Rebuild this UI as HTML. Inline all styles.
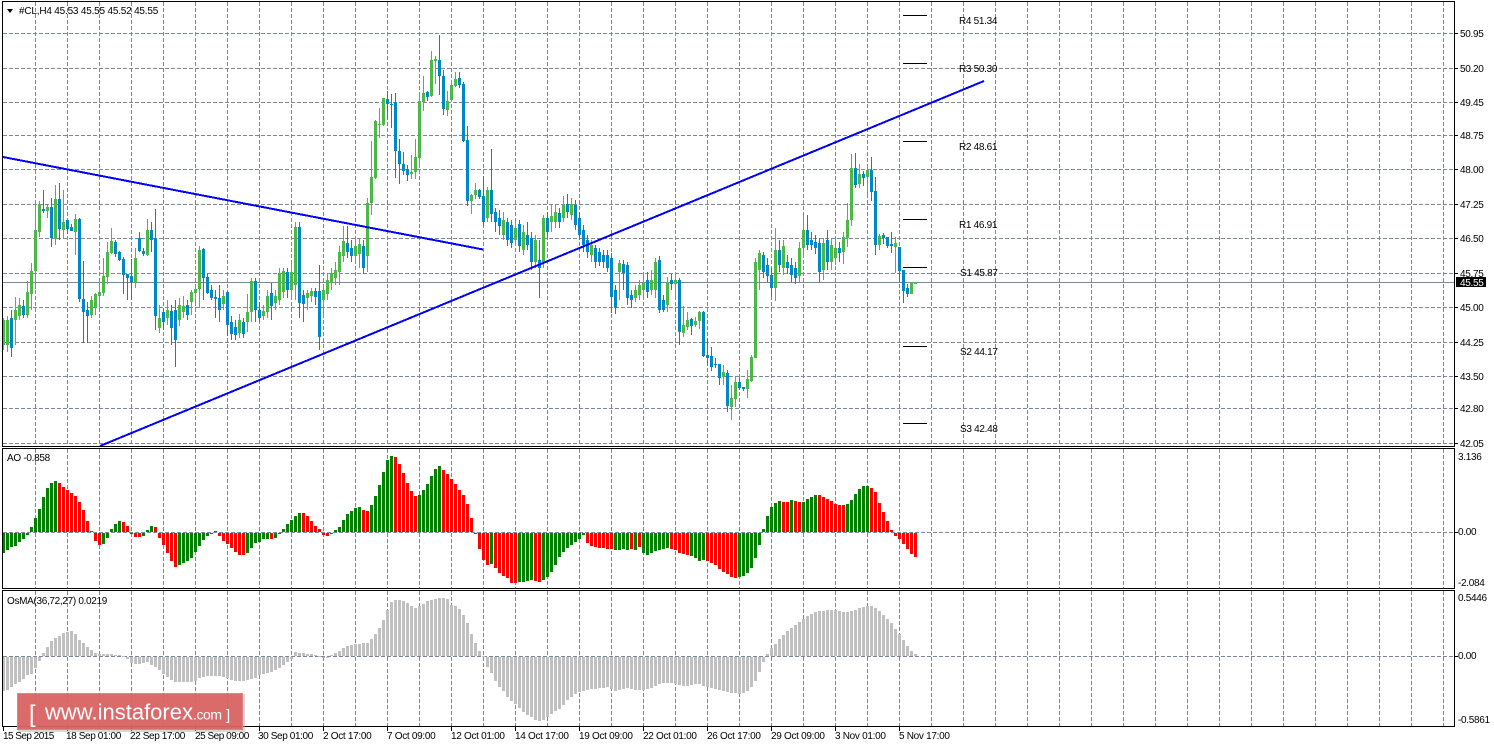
<!DOCTYPE html>
<html>
<head>
<meta charset="utf-8">
<title>#CL,H4</title>
<style>
html,body{margin:0;padding:0;background:#fff;width:1494px;height:744px;overflow:hidden}
svg{display:block;position:absolute;left:0;top:0}
text{font-family:"Liberation Sans",sans-serif;font-size:10px;letter-spacing:-.3px;fill:#000}
</style>
</head>
<body>
<svg id="c" width="1494" height="744" viewBox="0 0 1494 744" xmlns="http://www.w3.org/2000/svg">
<g id="grid" fill="none" stroke="#778899" stroke-width="1" stroke-dasharray="4 2" shape-rendering="crispEdges"></g>
<path d="M3 282.5H1454" stroke="#778899" stroke-width="1" shape-rendering="crispEdges"/>
<g id="bars" shape-rendering="crispEdges"></g>
<g fill="none" stroke="#0000ff" stroke-width="2" shape-rendering="crispEdges">
<path d="M3 157L483 249.5"/>
<path d="M100 446L984 81"/>
</g>
<g stroke="#000" stroke-width="1" shape-rendering="crispEdges">
<path d="M903 15.5H927M903 63.5H927M903 141.5H927M903 219.5H927M903 267.5H927M903 346.5H927M903 423.5H927"/>
</g>
<g>
<text x="959" y="24">R4 51.34</text>
<text x="959" y="72">R3 50.30</text>
<text x="959" y="150">R2 48.61</text>
<text x="959" y="228">R1 46.91</text>
<text x="960" y="276">S1 45.87</text>
<text x="960" y="355">S2 44.17</text>
<text x="960" y="432">S3 42.48</text>
</g>
<!-- frame -->
<g fill="none" stroke="#000" stroke-width="1" shape-rendering="crispEdges">
<path d="M2.5 1.5H1454.5V446.5H2.5Z"/>
<path d="M2.5 448.5H1454.5V588.5H2.5Z"/>
<path d="M2.5 590.5H1454.5V726.5H2.5Z"/>
<path id="ticks" d=""/>
</g>
<polygon points="7,9 13,9 10,13" fill="#000"/>
<text x="19" y="14" textLength="139">#CL,H4  45.53 45.55 45.52 45.55</text>
<text x="7" y="461">AO -0.858</text>
<text x="7" y="604" textLength="100">OsMA(36,72,27) 0.0219</text>
<!-- price axis -->
<g>
<text x="1460" y="37">50.95</text>
<text x="1460" y="72">50.20</text>
<text x="1460" y="106">49.45</text>
<text x="1460" y="139">48.75</text>
<text x="1460" y="173">48.00</text>
<text x="1460" y="208">47.25</text>
<text x="1460" y="242">46.50</text>
<text x="1460" y="277">45.75</text>
<text x="1460" y="311">45.00</text>
<text x="1460" y="346">44.25</text>
<text x="1460" y="380">43.50</text>
<text x="1460" y="412">42.80</text>
<text x="1460" y="447">42.05</text>
<rect x="1456" y="277" width="30" height="10" fill="#000"/>
<text x="1460" y="286" style="fill:#fff">45.55</text>
<text x="1458" y="460">3.136</text>
<text x="1458" y="535">0.00</text>
<text x="1458" y="586">-2.084</text>
<text x="1458" y="601">0.5446</text>
<text x="1458" y="659">0.00</text>
<text x="1458" y="723">-0.5861</text>
</g>
<!-- time axis -->
<g>
<text x="3" y="739" textLength="51">15 Sep 2015</text>
<text x="66" y="739" textLength="55">18 Sep 01:00</text>
<text x="130" y="739" textLength="55">22 Sep 17:00</text>
<text x="195" y="739" textLength="54">25 Sep 09:00</text>
<text x="258" y="739" textLength="55">30 Sep 01:00</text>
<text x="323" y="739">2 Oct 17:00</text>
<text x="387" y="739">7 Oct 09:00</text>
<text x="451" y="739">12 Oct 01:00</text>
<text x="515" y="739">14 Oct 17:00</text>
<text x="579" y="739">19 Oct 09:00</text>
<text x="643" y="739">22 Oct 01:00</text>
<text x="707" y="739">26 Oct 17:00</text>
<text x="771" y="739">29 Oct 09:00</text>
<text x="835" y="739">3 Nov 01:00</text>
<text x="899" y="739">5 Nov 17:00</text>
</g>
<!-- logo -->
<rect x="18" y="694" width="227" height="38" fill="#b0b0b0" opacity=".5"/>
<rect x="17" y="693" width="226" height="37" fill="#dc5c5c" opacity=".88"/>
<rect x="17.5" y="693.5" width="225" height="36" fill="none" stroke="#e88a8a" stroke-width="1" opacity=".7"/>
<text x="29" y="722" style="font-size:24px;letter-spacing:0;fill:#fff">[</text>
<text x="45" y="719.5" textLength="148" style="font-size:22px;letter-spacing:0;fill:#fff">www.instaforex</text>
<text x="193" y="719.5" textLength="29" style="font-size:14px;letter-spacing:0;fill:#fff">.com</text>
<text x="226" y="720" style="font-size:15px;letter-spacing:0;fill:#fff">]</text>
</svg>
<script>
(function(){
var grid='',ticks='',i;
var hs=[33,68,102,135,169,204,238,273,307,342,376,408,443,532,656];
for(i=0;i<hs.length;i++)grid+='M3 '+(hs[i]+.5)+'H1454';
for(i=35;i<1454;i+=32){
  grid+='M'+(i+.5)+' 2V446M'+(i+.5)+' 449V588M'+(i+.5)+' 591V726';
}
for(i=3;i<=899;i+=64)ticks+='M'+(i+.5)+' 727V731';
for(i=0;i<hs.length;i++)ticks+='M1455 '+(hs[i]+.5)+'H1458';
document.getElementById('grid').innerHTML='<path d="'+grid+'"/>';
document.getElementById('ticks').setAttribute('d',ticks);

var C=[];
function S(k,a){for(var j=0;j<a.length;j++)C[k+j]=a[j];}
S(0,["g320,345,318,350","g320,345,316,352","b318,348,310,357","g310,320,297,345","g305,316,298,320","b306,315,300,318","g292,315,281,318","g271,294,263,310",
"g230,271,200,289","g204,232,201,237","b209,211,190,213","g207,211,205,218","b207,238,198,247","g199,239,185,245","b199,229,183,240","g222,230,190,238","b220,229,220,234","b227,231,224,231","g219,232,214,255","b219,299,218,302"]);
S(20,["b299,312,261,343","b310,316,302,343","g300,315,296,318","g294,308,293,315","g292,296,278,312","g276,293,258,296","g252,277,242,284","g241,253,228,254","b242,254,240,257","b252,260,251,261","b259,275,257,294","b274,278,274,300","b276,282,259,300","g258,283,248,288","b238,251,232,252","b251,254,248,256","g230,255,219,256","b230,240,222,252","b238,316,209,330"]);
S(39,["g318,328,305,333","b312,322,308,330","g310,318,300,325","b311,328,305,345","b310,340,300,367","g305,320,298,326","g306,312,296,318","b305,315,300,320","g292,302,290,315","g289,293,285,305","g250,289,246,308","b249,278,248,300","b277,293,273,294","b290,298,285,300","b297,299,290,318","b298,310,285,322"]);
S(55,["g296,304,290,310","b292,325,291,336","b322,334,316,340","b327,335,320,340","g320,333,314,338","b322,334,318,338","g312,322,294,332","g281,312,278,322","b281,310,278,322","b310,318,302,322","g311,316,305,320","g296,312,290,318","b293,306,283,320","g296,303,290,310","g273,300,268,305","g271,292,268,298","b272,290,268,298","g272,290,262,300","g227,285,222,300","b227,303,222,318","b295,304,290,322","g293,298,290,310","g291,296,288,302","b291,297,288,305","b291,337,265,350","g290,300,285,315","g280,294,273,300","g273,283,268,290","g270,278,262,285","g252,272,246,285","g241,256,226,262","b243,252,226,258","b248,256,240,262","g246,256,240,262","g244,254,238,268","b246,268,240,274","g203,256,198,272"]);
S(92,["g177,203,141,215","g121,178,120,179","g124,125,108,138","g98,125,98,126","b99,104,91,119","b104,105,94,128","b102,151,93,178","b151,164,139,184","b164,171,152,175","b169,175,165,181","g172,174,155,179","g157,172,139,179","g101,158,92,167","g93,102,76,111","b92,97,91,101","g60,96,51,97","g59,61,56,84","b60,76,35,95","b76,109,70,115","g101,110,91,116","g85,100,80,102","g79,86,72,87","b78,85,72,88","b84,141,82,142","b140,201,126,206","g195,201,194,214","g190,195,183,199","b190,197,189,199","b196,222,176,226","g190,218,187,222","b190,214,149,222","b212,222,208,232"]);
S(124,["b218,226,210,235","g220,235,212,240","b222,240,218,246","b225,243,220,248","g228,240,222,245","b224,246,220,252","g232,250,225,255","b235,245,222,250","b238,262,232,270","g240,262,235,268","b260,268,240,298","g218,262,215,268","b218,232,212,238","g216,222,205,232","g212,222,205,228","b213,222,208,228","g205,218,196,222","b204,212,194,218","g204,215,198,220","b205,225,200,230","b218,235,212,240","b230,245,225,252","b240,252,235,258","g245,255,240,262","b248,262,245,268","b252,262,248,266","b255,262,250,268","b255,268,250,272","b258,297,253,313","b290,308,285,314","g263,272,260,300","b264,273,260,290","b265,298,262,305","b295,300,290,308","g290,298,285,302","g285,295,280,300","g283,290,275,296","b280,292,272,298","g280,290,270,295","g262,290,258,298","b260,310,256,313","b300,310,295,312","g282,305,277,312","b280,284,274,290","g280,284,272,300","b280,332,278,345"]);
S(170,["g325,333,306,337","g320,327,312,330","b319,326,318,335","g321,325,317,327","g312,321,311,329","b312,356,311,357","b355,358,338,365","b356,367,347,371","b364,365,358,368","b364,378,364,385","g372,377,365,385","b373,406,370,412","g398,407,385,420","g382,399,377,407","b382,388,378,390","b387,389,387,391","g379,389,370,398","g357,381,355,382","g262,358,258,358","g253,270,250,290","b255,272,252,278","b265,276,258,282","b275,288,268,297","g250,288,228,301","b250,265,240,272","g246,268,240,275","b262,268,255,274","b265,275,258,282","b268,278,262,284","g248,276,242,282","g230,248,216,258","b230,245,215,250","b240,245,232,250","b242,248,235,254","b243,272,238,282","g243,270,238,280","b240,262,230,270","g245,262,238,270","g248,258,240,265","b248,253,242,262"]);
S(210,["g237,252,232,264","g220,238,203,247","g168,220,154,226","b168,185,153,188","g174,184,164,188","b174,178,171,186","g170,177,165,197","b170,192,157,201","b191,245,177,255","g236,245,234,250","b235,238,233,244","b237,246,237,248","b244,246,232,253","g243,247,237,273","b247,271,247,282","b270,291,270,303","b288,294,284,297","g283,294,283,294","g282,284,282,284"]);

var G='#4db848',B='#0087c7',out='';
function R(x,y,w,h,f){if(h<1)h=1;out+='<rect x="'+x+'" y="'+y+'" width="'+w+'" height="'+h+'" fill="'+f+'"/>';}
for(i=0;i<C.length;i++){
  if(!C[i])continue;
  var col=C[i].charAt(0)=='g'?G:B,v=C[i].slice(1).split(',').map(Number),x=3+4*i;
  R(x,v[2],1,v[3]-v[2],col);
  R(Math.max(x-1,3),v[0],x==3?2:3,v[1]-v[0],col);
}

var AO="g-20 g-17 g-14 g-13 g-9 g-6 g-2 g5 g14 g23 g35 g44 g49 g51 r49 r45 r42 r39 r36 r30 r22 r11 r1 r-8 r-12 g-11 g-5 g3 g8 g11 r10 r6 r-1 r-4 r-4 g-3 g2 g6 r5 r-5 r-12 r-20 r-28 r-34 g-32 g-30 g-28 g-25 g-19 g-13 g-7 g-3 g-1 g1 r-3 r-8 r-11 r-15 r-19 r-22 r-22 g-20 g-15 g-10 g-9 g-6 g-6 r-6 g-5 g-1 g3 g8 g12 g16 g19 r19 r16 r11 r6 r3 r-2 r-3 g-1 g2 g5 g12 g18 g21 g24 g25 r22 r21 g27 g36 g47 g60 g72 g76 r75 r68 r59 r49 r41 r36 g37 g42 g48 g56 g63 g66 r62 r58 r53 r48 r42 r37 r28 r14 r-1 r-16 r-27 r-32 g-31 r-35 r-40 r-43 r-45 r-50 r-50 g-49 g-49 g-48 g-47 r-48 r-49 g-47 g-44 g-39 g-32 g-24 g-19 g-15 g-12 g-9 g-6 g-2 r-10 r-13 r-14 r-15 r-15 r-16 r-16 g-17 g-17 g-16 g-17 r-16 g-17 r-14 g-20 g-22 g-20 g-18 g-17 g-16 g-15 r-16 r-17 r-20 r-21 r-22 g-23 g-25 g-28 g-27 r-28 r-30 r-32 r-36 r-39 r-41 r-44 r-45 g-44 g-43 g-40 g-35 g-25 g-12 g3 g16 g25 g29 g31 r30 r30 g32 r31 r30 g30 g33 g35 g37 r37 r35 r33 r31 r28 r27 r27 g28 g32 g38 g43 g46 g46 r44 r40 r29 r20 r11 r2 r-3 r-6 r-11 r-16 r-21 r-24".split(' ');
for(i=0;i<AO.length;i++){
  var c=AO[i].charAt(0)=='g'?'#008000':'#ff0000',h=parseInt(AO[i].slice(1),10),X=3+4*i;
  var x0=Math.max(X-1,3),w=X==3?2:3;
  if(h>=0)R(x0,532-h,w,h,c);else R(x0,533,w,-h,c);
}
var OS=[-34,-33,-30,-27,-25,-22,-18,-17,-11,-4,3,9,15,18,20,23,24,25,22,16,13,9,6,3,2,2,2,2,1,1,0,-2,-6,-7,-7,-6,-5,-8,-10,-13,-17,-20,-23,-25,-25,-25,-25,-25,-24,-21,-20,-19,-19,-19,-19,-20,-21,-23,-24,-24,-24,-23,-22,-21,-18,-17,-16,-15,-13,-11,-8,-5,-2,4,3,3,2,2,1,0,-1,-1,1,3,5,8,10,11,12,12,13,13,17,22,28,36,46,54,56,56,55,53,50,48,50,52,55,56,57,58,58,57,51,50,47,41,33,22,13,5,0,-10,-16,-24,-30,-34,-40,-44,-47,-51,-55,-58,-60,-63,-64,-63,-60,-57,-54,-52,-48,-43,-40,-37,-35,-34,-33,-32,-32,-31,-31,-30,-32,-34,-33,-32,-31,-32,-33,-33,-33,-32,-31,-29,-27,-26,-26,-26,-27,-28,-29,-29,-28,-27,-27,-29,-30,-31,-32,-33,-34,-35,-36,-36,-37,-36,-34,-30,-24,-15,-5,2,8,12,17,21,25,28,31,34,37,40,42,44,45,45,46,46,46,45,44,44,45,46,48,49,50,50,48,45,41,37,33,27,22,16,10,5,2];
for(i=0;i<OS.length;i++){
  var h2=OS[i],X2=3+4*i,x2=Math.max(X2-1,3),w2=X2==3?2:3;
  if(h2>=0)R(x2,656-h2,w2,h2,'#c0c0c0');else R(x2,657,w2,-h2,'#c0c0c0');
}
document.getElementById('bars').innerHTML=out;
})();
</script>
</body>
</html>
